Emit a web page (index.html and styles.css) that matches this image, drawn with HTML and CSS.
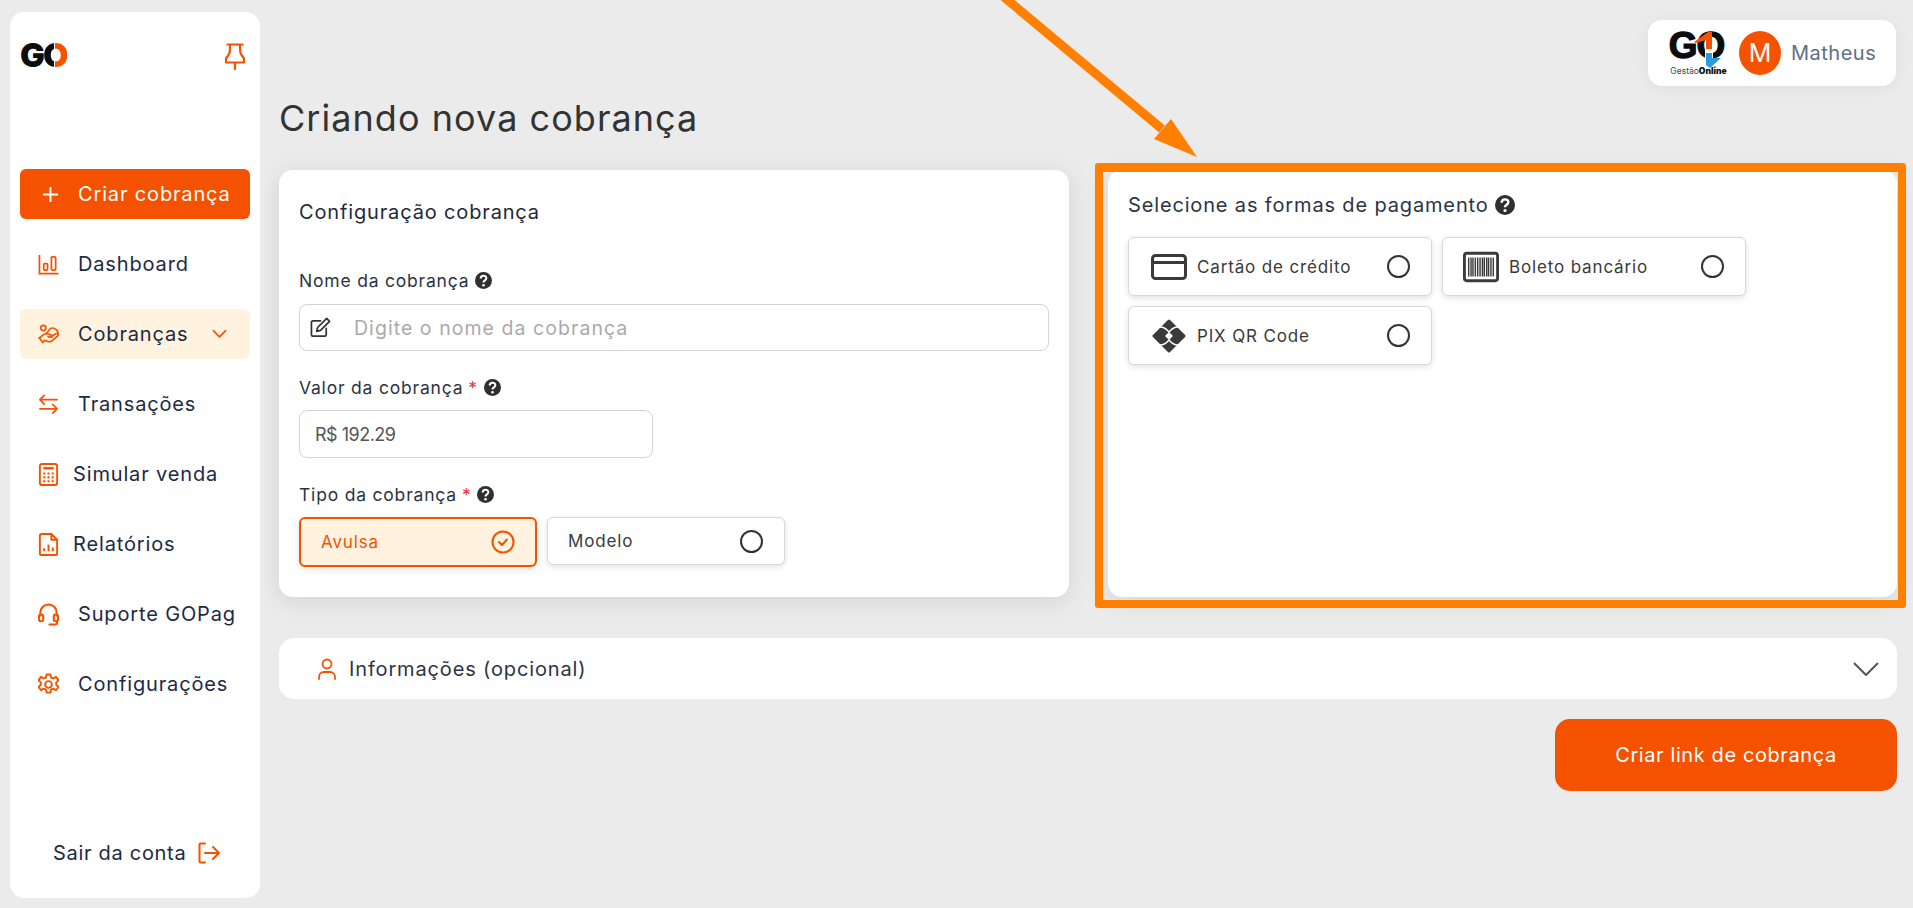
FILE: index.html
```html
<!DOCTYPE html>
<html lang="pt-BR">
<head>
    <meta charset="UTF-8">
    <meta name="viewport" content="width=device-width, initial-scale=1.0">
    <title>Criando nova cobrança</title>
    <link rel="stylesheet" href="styles.css">
</head>
<body>
    <aside class="sidebar">
        <div class="side-head">
            <span class="logo-small">G<span class="logo-o">O</span></span>
            <svg class="pin" viewBox="0 0 20 27" fill="none" stroke="#f55200" stroke-width="2.200" stroke-linejoin="round" stroke-linecap="round"><path d="M2.500 1.500h15M5 1.500v4c0 3-.5 5-1.500 6.500L1 15.500v4h18v-4L16.500 12C15.500 10.500 15 8.500 15 5.500v-4M10 19.500v6.500"/></svg>
        </div>
        <nav class="nav">
            <a class="nav-item create">
                <svg class="icon-plus" viewBox="0 0 18 18" fill="none" stroke="#fff" stroke-width="2"><path d="M9 1v16M1 9h16"/></svg>
                <span>Criar cobrança</span>
            </a>
            <a class="nav-item">
                <svg class="nav-icon" viewBox="0 0 22 22" fill="none" stroke="#f55200" stroke-width="1.800"><path d="M1.500 1v19.500h20"/><rect x="6" y="10" width="4" height="7" rx="1"/><rect x="14" y="3" width="4.500" height="14" rx="1"/></svg>
                <span>Dashboard</span>
            </a>
            <a class="nav-item active">
                <svg class="nav-icon" viewBox="0 0 24 24" fill="none" stroke="#f55200" stroke-width="1.900" stroke-linejoin="round" stroke-linecap="round"><circle cx="6" cy="4.500" r="3"/><path d="M9.500 11.500l3-4.500c1-2 4-3 6-2l2.500 1.500c1.500 1 2 3 1.500 4.500"/><path d="M1.500 16l4.500-3.500c2-2 4-2 6-1l3 1c2 .5 1.500 3-.5 2.500l-3-.5"/><path d="M15.500 14l5-3c2-1 3.500 1 2 2.500l-7 6c-1.500 1-3 1-4.500.5l-3-1.500-2.500 2.500L1.500 16"/></svg>
                <span>Cobranças</span>
                <svg class="nav-chevron" viewBox="0 0 16 10" fill="none" stroke="#f55200" stroke-width="1.800" stroke-linecap="round" stroke-linejoin="round"><path d="M1.500 1.500 8 8l6.500-6.500"/></svg>
            </a>
            <a class="nav-item">
                <svg class="nav-icon" viewBox="0 0 22 22" fill="none" stroke="#f55200" stroke-width="1.800" stroke-linecap="round" stroke-linejoin="round"><path d="M20 6H2M6.500 1.500 2 6l4.500 4.500M2 15.500h18M15.500 11l4.500 4.500-4.500 4.500"/></svg>
                <span>Transações</span>
            </a>
            <a class="nav-item tight">
                <svg class="nav-icon" viewBox="0 0 20 24" fill="none" stroke="#f55200"><rect x="1" y="1" width="18" height="22" rx="2.500" stroke-width="2"/><path d="M4.500 5.500h11" stroke-width="2.500"/><path d="M4.500 11h11M4.500 15h11M4.500 19h11" stroke-width="2.200" stroke-dasharray="2.200 2.200"/></svg>
                <span>Simular venda</span>
            </a>
            <a class="nav-item tight">
                <svg class="nav-icon" viewBox="0 0 20 24" fill="none" stroke="#f55200" stroke-width="2" stroke-linejoin="round"><path d="M3 1h10l6 6v14a2 2 0 0 1-2 2H3a2 2 0 0 1-2-2V3a2 2 0 0 1 2-2zM13 1v6h6"/><path d="M5.500 19v-3M10 19v-7M14.500 19v-4"/></svg>
                <span>Relatórios</span>
            </a>
            <a class="nav-item">
                <svg class="nav-icon" viewBox="0 0 22 24" fill="none" stroke="#f55200" stroke-width="2.200" stroke-linecap="round" stroke-linejoin="round"><path d="M2.500 13v-3a8.500 8.500 0 0 1 17 0v3"/><rect x="1" y="12" width="4.500" height="7" rx="2"/><rect x="16.500" y="12" width="4.500" height="7" rx="2"/><path d="M20 19v1.500a2 2 0 0 1-2 2h-6"/></svg>
                <span>Suporte GOPag</span>
            </a>
            <a class="nav-item">
                <svg class="nav-icon" viewBox="1 0 22 24" fill="none" stroke="#f55200" stroke-width="2" stroke-linejoin="round"><path d="M10 1.500h4l.7 3.200 2.300 1 2.800-1.700 2.600 3.400-2.300 2.300v2.600l2.300 2.300-2.600 3.400-2.800-1.700-2.300 1-.7 3.200h-4l-.7-3.200-2.300-1-2.800 1.700-2.600-3.400 2.300-2.300v-2.600L1.600 7.400l2.600-3.400L7 5.700l2.300-1z"/><circle cx="12" cy="12" r="3.500"/></svg>
                <span>Configurações</span>
            </a>
        </nav>
        <a class="logout">
            <span>Sair da conta</span>
            <svg viewBox="0 0 22 22" fill="none" stroke="#f55200" stroke-width="2" stroke-linecap="round" stroke-linejoin="round"><path d="M7 1.500H2.500a1 1 0 0 0-1 1v17a1 1 0 0 0 1 1H7M7 11h14M15 5l6 6-6 6"/></svg>
        </a>
    </aside>

    <main class="main">
        <header class="topbar">
            <div class="user-box">
                <div class="brand">
                    <span class="brand-go">GO</span>
                    <svg class="brand-arrows" viewBox="0 0 34 42"><rect x="16" y="10" width="8" height="28" fill="#fff"/><path d="M5 14 19 4h4v17h-6v-9L7 15z" fill="#f55200"/><path d="M17 25h6v5h9L21 40l-4-3z" fill="#2b9be0"/></svg>
                    <span class="brand-name">Gestão<b>Online</b></span>
                </div>
                <span class="avatar">M</span>
                <span class="user-name">Matheus</span>
            </div>
        </header>

        <h1 class="page-title">Criando nova cobrança</h1>

        <section class="columns">
            <div class="card config">
                <h2 class="card-title">Configuração cobrança</h2>

                <label class="field-label name-label">Nome da cobrança
                    <svg class="help"><use href="#help"/></svg>
                </label>
                <div class="input-box full">
                    <svg class="edit-icon" viewBox="0 0 22 22" fill="none" stroke="#333" stroke-width="1.800" stroke-linejoin="round" stroke-linecap="round"><path d="M11 4H3a1.500 1.500 0 0 0-1.500 1.500v13A1.500 1.500 0 0 0 3 20h12.500a1.500 1.500 0 0 0 1.500-1.500V12"/><path d="M17.500 1.500 20.500 4.500 11 14l-4 1 1-4z"/></svg>
                    <input class="text-input" type="text" placeholder="Digite o nome da cobrança">
                </div>

                <label class="field-label">Valor da cobrança <span class="req">*</span>
                    <svg class="help"><use href="#help"/></svg>
                </label>
                <div class="input-box half">
                    <input class="text-input value" type="text" value="R$ 192.29">
                </div>

                <label class="field-label">Tipo da cobrança <span class="req">*</span>
                    <svg class="help"><use href="#help"/></svg>
                </label>
                <div class="type-row">
                    <div class="option type selected">
                        <span>Avulsa</span>
                        <svg class="check" viewBox="0 0 24 24" fill="none" stroke="#f55200" stroke-width="2" stroke-linecap="round" stroke-linejoin="round"><circle cx="12" cy="12" r="10.500"/><path d="m8 12 3 3 5-5.500"/></svg>
                    </div>
                    <div class="option type">
                        <span>Modelo</span>
                        <i class="radio"></i>
                    </div>
                </div>
            </div>

            <div class="card payment">
                <h2 class="pay-title">Selecione as formas de pagamento
                    <svg class="help big"><use href="#help"/></svg>
                </h2>
                <div class="pay-grid">
                    <div class="option pay">
                        <svg class="pay-icon" viewBox="0 0 36 26" fill="none" stroke="#3a3a3a" stroke-width="3"><rect x="1.500" y="1.500" width="33" height="23" rx="3"/><path d="M1.500 8.500h33"/></svg>
                        <span>Cartão de crédito</span>
                        <i class="radio"></i>
                    </div>
                    <div class="option pay barcode">
                        <svg class="pay-icon" viewBox="0 0 38 32" fill="none"><rect x="1.500" y="1.500" width="35" height="29" rx="2.500" stroke="#3a3a3a" stroke-width="3"/><path d="M6 6v20M8.500 6v20M10.500 6v20M13 6v20M15.500 6v20M18 6v20M20.500 6v20M22.500 6v20M25 6v20M27 6v20M29.500 6v20M32 6v20" stroke="#3a3a3a" stroke-width="1.500"/></svg>
                        <span>Boleto bancário</span>
                        <i class="radio"></i>
                    </div>
                    <div class="option pay">
                        <svg class="pay-icon" viewBox="0 0 34 34"><path d="M17 2 32 17 17 32 2 17z" fill="#3a3a3a" stroke="#3a3a3a" stroke-width="3" stroke-linejoin="round"/><path d="M8 8q5 0 9 5q4-5 9-5M8 26q5 0 9-5q4 5 9 5" fill="none" stroke="#fff" stroke-width="1.400"/><path d="M17 13l-4 4 4 4 4-4z" fill="#fff"/></svg>
                        <span>PIX QR Code</span>
                        <i class="radio"></i>
                    </div>
                </div>
                <div class="highlight"></div>
            </div>
        </section>

        <section class="info-bar">
            <svg class="person" viewBox="0 0 20 22" fill="none" stroke="#f55200" stroke-width="1.800" stroke-linecap="round"><circle cx="10" cy="6" r="4.500"/><path d="M2 21v-2a5 5 0 0 1 5-5h6a5 5 0 0 1 5 5v2"/></svg>
            <span class="info-text">Informações (opcional)</span>
            <svg class="info-chevron" viewBox="0 0 26 14" fill="none" stroke="#555" stroke-width="2"><path d="M1 1l12 12L25 1"/></svg>
        </section>

        <div class="actions">
            <button class="submit">Criar link de cobrança</button>
        </div>
    </main>

    <svg class="arrow" viewBox="0 0 200 160">
        <path d="M4-3 162 129" stroke="#ff8000" stroke-width="9"/>
        <path d="M197 157 171 119 154 139z" fill="#ff8000"/>
    </svg>

    <svg class="defs">
        <symbol id="help" viewBox="0 0 18 18">
            <circle cx="9" cy="9" r="9" fill="#2f2f2f"/>
            <path d="M6 7c0-4 6-4 6-.5 0 2.500-3 2-3 4.500" fill="none" stroke="#fff" stroke-width="2.200"/>
            <circle cx="9" cy="14" r="1.400" fill="#fff"/>
        </symbol>
    </svg>
</body>
</html>
```

FILE: styles.css
```css
*{margin: 0px;padding: 0px;box-sizing: border-box;}
body{
    display: flex;
    height: 908px;
    overflow: hidden;
    position: relative;
    background: #ebebeb;
    font-family: Inter, "Liberation Sans", sans-serif;
    color: #2c2c2c;
}
.sidebar{
    width: 250px;
    height: 886px;
    margin: 12px 0px 0px 10px;
    padding: 0px 10px;
    background: #fff;
    border-radius: 14px;
    display: flex;
    flex-direction: column;
    flex-shrink: 0;
}
.side-head{
    height: 157px;
    padding: 31px 5px 0px 0px;
    display: flex;
    justify-content: space-between;
    align-items: flex-start;
}
.logo-small{
    font-size: 33px;
    line-height: 24px;
    font-weight: 900;
    letter-spacing: -2px;
    color: #0d0d0d;
}
.logo-o{
    background: linear-gradient(90deg, #0d0d0d 45%, #fff 45%, #fff 52%, #f55200 52%);
    -webkit-background-clip: text;
    background-clip: text;
    color: transparent;
}
.pin{
    width: 20px;
    height: 27px;
}
.nav{
    display: flex;
    flex-direction: column;
    gap: 20px;
}
.nav-item{
    height: 50px;
    padding-left: 18px;
    display: flex;
    align-items: center;
    gap: 19px;
    border-radius: 6px;
    font-size: 20px;
    letter-spacing: .85px;
    color: #1d2a44;
}
.nav-item.tight{
    gap: 14px;
}
.nav-icon{
    width: 21px;
    height: 23px;
    flex-shrink: 0;
}
.create{
    background: #f55200;
    color: #fff;
    padding-left: 22px;
}
.icon-plus{
    width: 17px;
    height: 17px;
}
.active{
    background: #fff3e0;
    position: relative;
}
.nav-chevron{
    width: 15px;
    height: 10px;
    margin-left: 5px;
}
.logout{
    margin-top: auto;
    margin-bottom: 32px;
    padding-left: 33px;
    height: 26px;
    display: flex;
    align-items: center;
    gap: 12px;
    font-size: 20px;
    letter-spacing: .7px;
    color: #1d2a44;
}
.logout svg{
    width: 22px;
    height: 22px;
}
.main{
    flex: 1;
    margin: 0px 16px 0px 19px;
    padding-top: 20px;
    min-width: 0px;
}
.topbar{
    display: flex;
    justify-content: flex-end;
}
.user-box{
    width: 248px;
    height: 66px;
    margin-right: 1px;
    padding-left: 19px;
    background: #fff;
    border-radius: 14px;
    box-shadow: 0px 2px 16px rgba(0,0,0,.06);
    display: flex;
    align-items: center;
}
.brand{
    width: 63px;
    height: 46px;
    position: relative;
    display: flex;
    flex-direction: column;
    align-items: center;
}
.brand-go{
    font-family: "Liberation Sans", sans-serif;
    font-size: 37px;
    line-height: 31px;
    font-weight: 700;
    letter-spacing: -1px;
    -webkit-text-stroke: 1.300px #0d0d0d;
    color: #0d0d0d;
    margin: 0px 4px 5px 0px;
}
.brand-arrows{
    position: absolute;
    left: 22px;
    top: -2px;
    width: 34px;
    height: 42px;
}
.brand-name{
    font-size: 8.500px;
    line-height: 10px;
    white-space: nowrap;
    color: #444;
}
.brand-name b{
    font-weight: 900;
    color: #111;
}
.avatar{
    width: 42px;
    height: 44px;
    margin-left: 9px;
    border-radius: 50%;
    background: #f55200;
    color: #fff;
    font-size: 25px;
    display: flex;
    align-items: center;
    justify-content: center;
}
.user-name{
    margin-left: 10px;
    font-size: 20px;
    letter-spacing: .5px;
    color: #5f6f85;
}
.page-title{
    margin: 10px 0px 30px;
    font-size: 36px;
    line-height: 44px;
    font-weight: 400;
    letter-spacing: 1.050px;
    color: #333;
}
.columns{
    display: grid;
    grid-template-columns: 790px 789px;
    gap: 39px;
    height: 427px;
}
.card{
    background: #fff;
    border-radius: 14px;
    box-shadow: 0px 4px 24px rgba(0,0,0,.1);
}
.config{
    padding: 30px 20px 0px 20px;
}
.card-title{
    font-size: 20px;
    line-height: 24px;
    font-weight: 400;
    letter-spacing: .85px;
    color: #22293a;
    margin-bottom: 44px;
}
.field-label{
    display: flex;
    align-items: center;
    gap: 6px;
    height: 24px;
    font-size: 17.500px;
    letter-spacing: .8px;
    color: #2c3444;
}
.req{
    color: #e8343f;
    margin-left: -1px;
}
.help{
    width: 17px;
    height: 17px;
}
.help.big{
    width: 20px;
    height: 20px;
}
.input-box{
    height: 48px;
    margin: 11px 0px 24px;
    border: 1px solid #d4d4d4;
    border-radius: 8px;
    display: flex;
    align-items: center;
    padding-left: 15px;
}
.input-box.full{
    padding-left: 10px;
    height: 47px;
    margin-top: 12px;
}
.input-box.half{
    width: 354px;
}
.edit-icon{
    width: 21px;
    height: 21px;
    margin-right: 23px;
}
.text-input{
    flex: 1;
    border: none;
    outline: none;
    background: none;
    font: inherit;
    font-size: 19.500px;
    letter-spacing: 1.050px;
    color: #555;
}
.text-input.value{
    font-size: 18px;
    letter-spacing: -.500px;
}
.text-input::placeholder{
    color: #aaa;
}
.type-row{
    display: flex;
    gap: 10px;
    margin-top: 11px;
    align-items: flex-start;
}
.option{
    background: #fff;
    border: 1px solid #d8d8d8;
    border-radius: 6px;
    box-shadow: 0px 2px 6px rgba(0,0,0,.12);
    display: flex;
    align-items: center;
    font-size: 17px;
    letter-spacing: .85px;
    color: #3a3a3a;
}
.type{
    width: 238px;
    height: 48px;
    padding: 0px 21px 0px 20px;
    justify-content: space-between;
}
.selected{
    height: 50px;
    border: 2px solid #f55200;
    background: #fff3e0;
    color: #f55200;
    padding-left: 20px;
    padding-right: 20px;
}
.check{
    width: 24px;
    height: 24px;
}
.radio{
    width: 23px;
    height: 23px;
    border: 2px solid #333;
    border-radius: 50%;
    flex-shrink: 0;
}
.payment{
    padding: 22px 20px;
    position: relative;
}
.pay-title{
    display: flex;
    align-items: center;
    gap: 6px;
    height: 26px;
    font-size: 20px;
    font-weight: 400;
    letter-spacing: .85px;
    color: #2c3444;
}
.pay-grid{
    margin-top: 19px;
    display: grid;
    grid-template-columns: 304px 304px;
    column-gap: 10px;
    row-gap: 10px;
}
.pay{
    height: 59px;
    padding: 0px 21px 0px 22px;
}
.pay span{
    flex: 1;
    margin-left: -1px;
}
.pay-icon{
    width: 36px;
    height: 34px;
    margin-right: 11px;
    flex-shrink: 0;
}
.barcode{
    padding-left: 20px;
}
.highlight{
    position: absolute;
    top: -7px;
    left: -13px;
    right: -9px;
    bottom: -11px;
    border: 8px solid #ff8000;
    border-top-width: 9px;
    border-radius: 3px;
    pointer-events: none;
}
.info-bar{
    height: 61px;
    margin-top: 41px;
    padding: 0px 18px 0px 38px;
    background: #fff;
    border-radius: 15px;
    display: flex;
    align-items: center;
}
.person{
    width: 20px;
    height: 22px;
    margin-right: 12px;
}
.info-text{
    flex: 1;
    font-size: 20px;
    letter-spacing: .85px;
    color: #2c3444;
}
.info-chevron{
    width: 26px;
    height: 14px;
}
.actions{
    display: flex;
    justify-content: flex-end;
    margin-top: 20px;
}
.submit{
    width: 342px;
    height: 72px;
    border: none;
    border-radius: 15px;
    background: #f55200;
    color: #fff;
    font: inherit;
    font-size: 20px;
    letter-spacing: .6px;
}
.arrow{
    position: absolute;
    left: 1000px;
    top: 0px;
    width: 200px;
    height: 160px;
}
.defs{
    display: none;
}
```
